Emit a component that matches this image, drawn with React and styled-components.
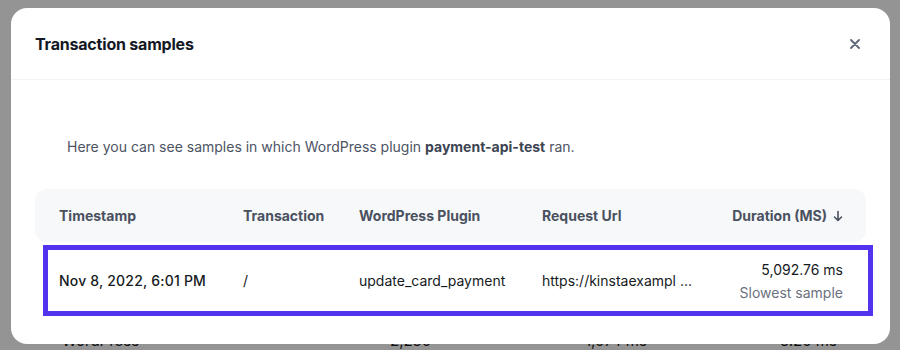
import styled, { createGlobalStyle } from 'styled-components';

const GlobalStyle = createGlobalStyle`
  html, body {
    margin: 0;
    padding: 0;
    background: #ffffff;
    font-family: Inter, "Noto Sans", sans-serif;
    -webkit-font-smoothing: antialiased;
  }
  * { box-sizing: border-box; }
`

const Page = styled.div`
  width: 900px;
  height: 350px;
  overflow: hidden;
  position: relative;
  background: #ffffff;
`

const BackRow = styled.div`
  display: grid;
  grid-template-columns: 328px 195px 195px 160px 1fr;
  height: 54px;
  align-items: center;
  padding-left: 62px;
  font-size: 15px;
  color: #1b1b1b;
  white-space: nowrap;
`

const Overlay = styled.div`
  position: absolute;
  inset: 0;
  background: rgba(0, 0, 0, 0.42);
  padding: 8px 10px 6px 11px;
  display: flex;
`

const Modal = styled.div`
  flex: 1;
  min-width: 0;
  background: #ffffff;
  border-radius: 16px;
  display: flex;
  flex-direction: column;
`

const Header = styled.div`
  display: flex;
  align-items: center;
  justify-content: space-between;
  padding: 24px 25px 24px 24px;
  height: 72px;
  border-bottom: 1px solid #f1f3f6;
`

const Title = styled.h2`
  margin: 0;
  font-size: 16px;
  line-height: 24px;
  font-weight: 700;
  color: #141824;
  letter-spacing: -0.2px;
`

const CloseBtn = styled.button`
  border: 0;
  background: none;
  padding: 0;
  width: 20px;
  height: 20px;
  display: flex;
  align-items: center;
  justify-content: center;
  cursor: pointer;
`

const Body = styled.div`
  padding: 57px 24px 0 24px;
`

const Intro = styled.p`
  margin: 0 0 32px 32px;
  font-size: 14px;
  line-height: 20px;
  color: #4c5363;

  strong {
    font-weight: 700;
    color: #3d4452;
  }
`

const Columns = `
  display: grid;
  grid-template-columns: 184px 116px 183px minmax(0, 1fr) auto;
  align-items: center;
`

const HeadRow = styled.div`
  ${Columns}
  height: 53px;
  padding: 0 23px 0 24px;
  background: #f7f8fa;
  border-radius: 12px;
  font-size: 14px;
  font-weight: 700;
  color: #4a5160;
`

const HeadCell = styled.div`
  display: flex;
  align-items: center;
  justify-content: ${p => (p.$right ? 'flex-end' : 'flex-start')};
  gap: 6px;
  white-space: nowrap;
`

const Row = styled.div`
  ${Columns}
  margin: 3px -7px 0 8px;
  height: 71px;
  border: 5px solid #5333ed;
  padding: 0 25px 0 11px;
  font-size: 14px;
  color: #161a22;
`

const Cell = styled.div`
  text-align: ${p => (p.$right ? 'right' : 'left')};
  font-weight: ${p => (p.$strong ? 500 : 400)};
  letter-spacing: ${p => (p.$strong ? '0.2px' : '0')};
  white-space: nowrap;
  line-height: 23px;
`

const Muted = styled.div`
  color: #6b7280;
`

const backRows = ['02', '03', '13', '03', '03', '04', '15']

export default function App() {
  return (
    <Page>
      <GlobalStyle />
      <div style={{ marginTop: -11 }}>
        {backRows.map((v, i) => (
          <BackRow key={i}>
            <span>WordPress</span>
            <span>2,250</span>
            <span>1,074 ms</span>
            <span>5.20 ms</span>
            <span style={{ paddingLeft: 8 }}>{v}</span>
          </BackRow>
        ))}
      </div>
      <Overlay>
        <Modal>
          <Header>
            <Title>Transaction samples</Title>
            <CloseBtn aria-label="Close">
              <svg width="10" height="10" viewBox="0 0 10 10">
                <path d="M1 1L9 9M9 1L1 9" stroke="#5f6675" strokeWidth="1.8" strokeLinecap="round" />
              </svg>
            </CloseBtn>
          </Header>
          <Body>
            <Intro>
              Here you can see samples in which WordPress plugin <strong>payment-api-test</strong> ran.
            </Intro>
            <HeadRow>
              <HeadCell>Timestamp</HeadCell>
              <HeadCell>Transaction</HeadCell>
              <HeadCell>WordPress Plugin</HeadCell>
              <HeadCell>Request Url</HeadCell>
              <HeadCell $right>
                Duration (MS)
                <svg width="10" height="12" viewBox="0 0 10 12">
                  <path d="M5 1.5V10.5M1.5 7L5 10.5L8.5 7" stroke="#4a5160" strokeWidth="1.6" fill="none" strokeLinecap="round" strokeLinejoin="round" />
                </svg>
              </HeadCell>
            </HeadRow>
            <Row>
              <Cell $strong>Nov 8, 2022, 6:01 PM</Cell>
              <Cell>/</Cell>
              <Cell>update_card_payment</Cell>
              <Cell>https://kinstaexampl ...</Cell>
              <Cell $right>
                <div>5,092.76 ms</div>
                <Muted>Slowest sample</Muted>
              </Cell>
            </Row>
          </Body>
        </Modal>
      </Overlay>
    </Page>
  )
}
